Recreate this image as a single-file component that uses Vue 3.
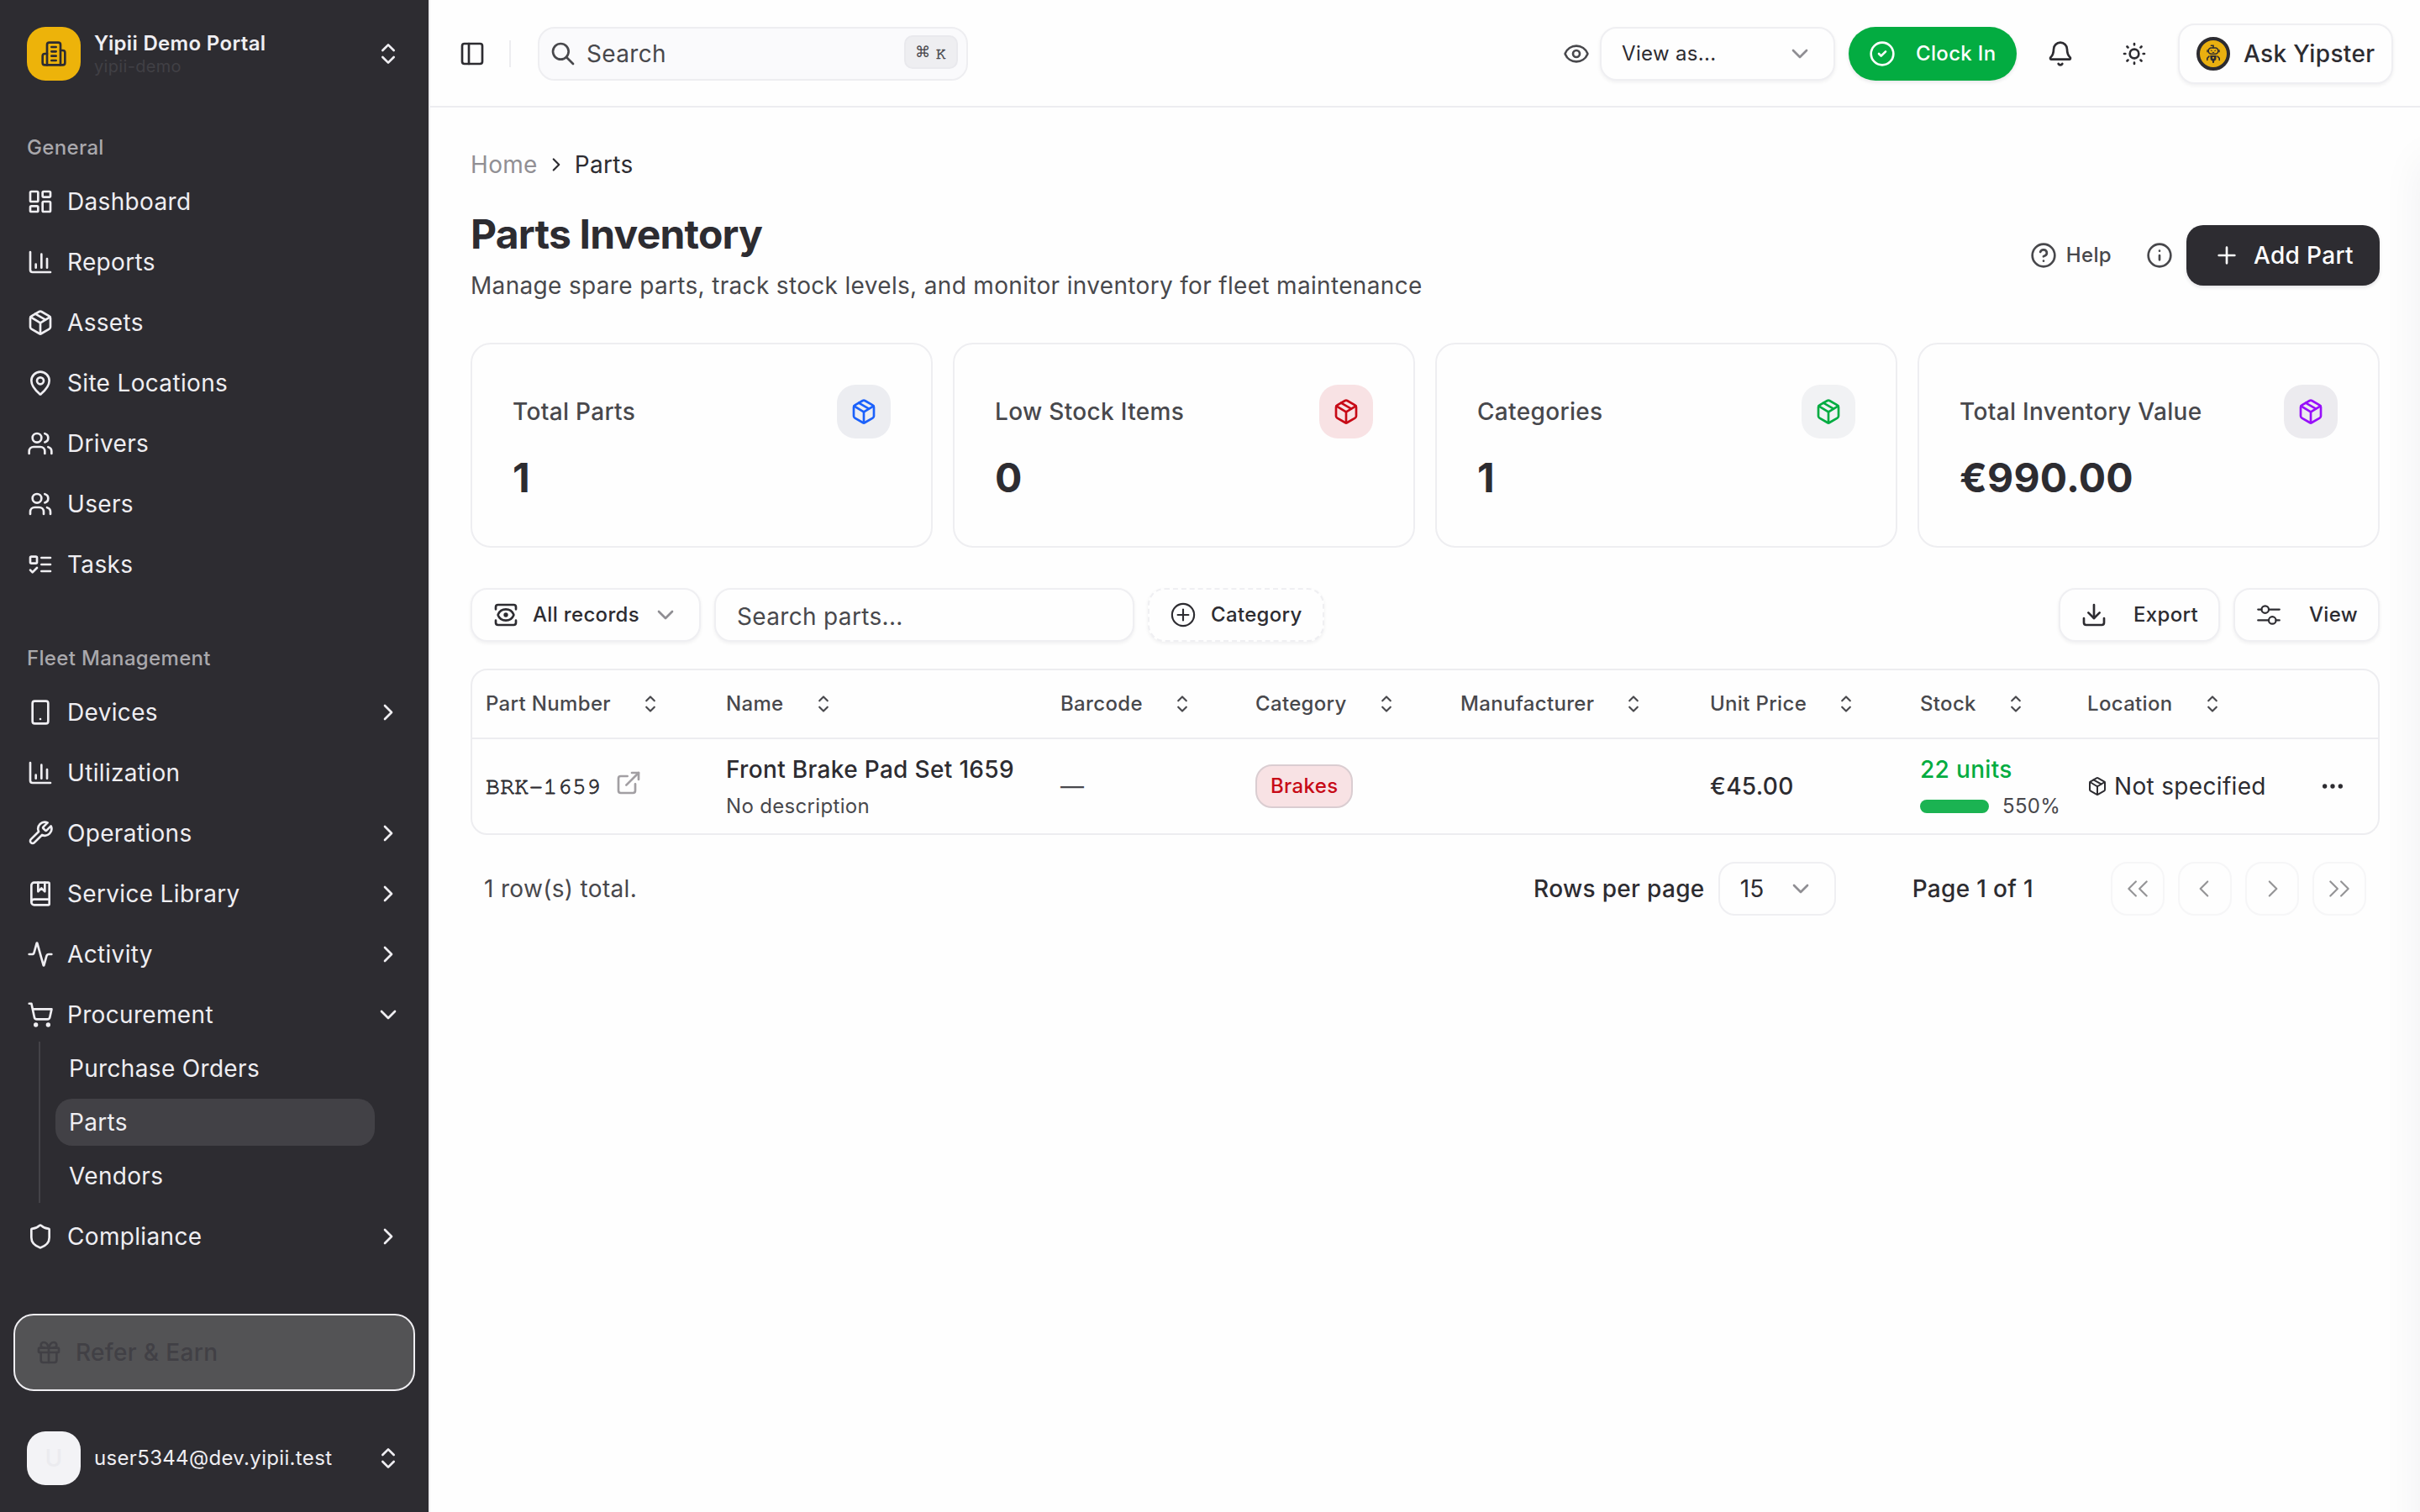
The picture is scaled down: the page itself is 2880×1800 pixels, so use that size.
<script setup>
import { h } from 'vue'

const paths = {
  building: '<path d="M6 22V4a2 2 0 0 1 2-2h8a2 2 0 0 1 2 2v18Z"/><path d="M6 12H4a2 2 0 0 0-2 2v6a2 2 0 0 0 2 2h2"/><path d="M18 9h2a2 2 0 0 1 2 2v9a2 2 0 0 1-2 2h-2"/><path d="M10 6h4M10 10h4M10 14h4M10 18h4"/>',
  updown: '<path d="m7 15 5 5 5-5"/><path d="m7 9 5-5 5 5"/>',
  dashboard: '<rect width="7" height="9" x="3" y="3" rx="1"/><rect width="7" height="5" x="14" y="3" rx="1"/><rect width="7" height="9" x="14" y="12" rx="1"/><rect width="7" height="5" x="3" y="16" rx="1"/>',
  chart: '<path d="M3 3v16a2 2 0 0 0 2 2h16"/><path d="M18 17V9M13 17V5M8 17v-3"/>',
  package: '<path d="M11 21.73a2 2 0 0 0 2 0l7-4A2 2 0 0 0 21 16V8a2 2 0 0 0-1-1.73l-7-4a2 2 0 0 0-2 0l-7 4A2 2 0 0 0 3 8v8a2 2 0 0 0 1 1.73z"/><path d="M12 22V12"/><path d="m3.3 7 7.703 4.734a2 2 0 0 0 1.994 0L20.7 7"/><path d="m7.5 4.27 9 5.15"/>',
  pin: '<path d="M20 10c0 4.993-5.539 10.193-7.399 11.799a1 1 0 0 1-1.202 0C9.539 20.193 4 14.993 4 10a8 8 0 0 1 16 0"/><circle cx="12" cy="10" r="3"/>',
  drivers: '<path d="M16 21v-2a4 4 0 0 0-4-4H6a4 4 0 0 0-4 4v2"/><circle cx="9" cy="7" r="4"/><path d="M22 21v-2a4 4 0 0 0-3-3.87"/><path d="M16 3.13a4 4 0 0 1 0 7.75"/>',
  users: '<circle cx="9" cy="7" r="4"/><path d="M3 21v-2a4 4 0 0 1 4-4h4a4 4 0 0 1 4 4v2"/><path d="M16 3.13a4 4 0 0 1 0 7.75"/><path d="M21 21v-2a4 4 0 0 0-3-3.85"/>',
  tasks: '<rect x="3" y="5" width="6" height="6" rx="1"/><path d="m3 17 2 2 4-4"/><path d="M13 6h8M13 12h8M13 18h8"/>',
  phone: '<rect width="14" height="20" x="5" y="2" rx="2"/><path d="M12 18h.01"/>',
  wrench: '<path d="M14.7 6.3a1 1 0 0 0 0 1.4l1.6 1.6a1 1 0 0 0 1.4 0l3.77-3.77a6 6 0 0 1-7.94 7.94l-6.91 6.91a2.12 2.12 0 0 1-3-3l6.91-6.91a6 6 0 0 1 7.94-7.94l-3.76 3.76z"/>',
  book: '<path d="M10 2v8l3-3 3 3V2"/><path d="M4 19.5v-15A2.5 2.5 0 0 1 6.5 2H19a1 1 0 0 1 1 1v18a1 1 0 0 1-1 1H6.5a1 1 0 0 1 0-5H20"/>',
  activity: '<path d="M22 12h-2.48a2 2 0 0 0-1.93 1.46l-2.35 8.36a.25.25 0 0 1-.48 0L9.24 2.18a.25.25 0 0 0-.48 0l-2.35 8.36A2 2 0 0 1 4.49 12H2"/>',
  cart: '<circle cx="8" cy="21" r="1"/><circle cx="19" cy="21" r="1"/><path d="M2.05 2.05h2l2.66 12.42a2 2 0 0 0 2 1.58h9.78a2 2 0 0 0 1.95-1.57l1.65-7.43H5.12"/>',
  shield: '<path d="M20 13c0 5-3.5 7.5-7.66 8.95a1 1 0 0 1-.67-.01C7.5 20.5 4 18 4 13V6a1 1 0 0 1 1-1c2 0 4.5-1.2 6.24-2.72a1.17 1.17 0 0 1 1.52 0C14.51 3.81 17 5 19 5a1 1 0 0 1 1 1z"/>',
  gift: '<rect x="3" y="8" width="18" height="4" rx="1"/><path d="M12 8v13"/><path d="M19 12v7a2 2 0 0 1-2 2H7a2 2 0 0 1-2-2v-7"/><path d="M7.5 8a2.5 2.5 0 0 1 0-5A4.8 8 0 0 1 12 8a4.8 8 0 0 1 4.5-5 2.5 2.5 0 0 1 0 5"/>',
  right: '<path d="m9 18 6-6-6-6"/>',
  down: '<path d="m6 9 6 6 6-6"/>',
  panel: '<rect width="18" height="18" x="3" y="3" rx="2"/><path d="M9 3v18"/>',
  search: '<circle cx="10" cy="10" r="7"/><path d="m21 21-6-6"/>',
  eye: '<path d="M2.062 12.348a1 1 0 0 1 0-.696 10.75 10.75 0 0 1 19.876 0 1 1 0 0 1 0 .696 10.75 10.75 0 0 1-19.876 0"/><circle cx="12" cy="12" r="3"/>',
  check: '<circle cx="12" cy="12" r="10"/><path d="m9 12 2 2 4-4"/>',
  bell: '<path d="M10.268 21a2 2 0 0 0 3.464 0"/><path d="M3.262 15.326A1 1 0 0 0 4 17h16a1 1 0 0 0 .74-1.673C19.41 13.956 18 12.499 18 8A6 6 0 0 0 6 8c0 4.499-1.411 5.956-2.738 7.326"/>',
  sun: '<circle cx="12" cy="12" r="4"/><path d="M12 3v1M12 20v1M3 12h1M20 12h1M18.364 5.636l-.707.707M6.343 17.657l-.707.707M5.636 5.636l.707.707M17.657 17.657l.707.707"/>',
  help: '<circle cx="12" cy="12" r="10"/><path d="M9.09 9a3 3 0 0 1 5.83 1c0 2-3 3-3 3"/><path d="M12 17h.01"/>',
  info: '<circle cx="12" cy="12" r="10"/><path d="M12 16v-4M12 8h.01"/>',
  plus: '<path d="M5 12h14M12 5v14"/>',
  view: '<path d="M21 17v2a2 2 0 0 1-2 2H5a2 2 0 0 1-2-2v-2"/><path d="M21 7V5a2 2 0 0 0-2-2H5a2 2 0 0 0-2 2v2"/><circle cx="12" cy="12" r="1"/><path d="M18.944 12.33a1 1 0 0 0 0-.66 7.5 7.5 0 0 0-13.888 0 1 1 0 0 0 0 .66 7.5 7.5 0 0 0 13.888 0"/>',
  download: '<path d="M21 15v4a2 2 0 0 1-2 2H5a2 2 0 0 1-2-2v-4"/><path d="m7 10 5 5 5-5"/><path d="M12 15V3"/>',
  external: '<path d="M15 3h6v6"/><path d="M10 14 21 3"/><path d="M18 13v6a2 2 0 0 1-2 2H5a2 2 0 0 1-2-2V8a2 2 0 0 1 2-2h6"/>',
  dots: '<circle cx="12" cy="12" r="1"/><circle cx="19" cy="12" r="1"/><circle cx="5" cy="12" r="1"/>'
}

// Thin icons drawn on a 15-unit grid with a one-unit stroke
const thin = {
  sort: '<path d="M5.25 5.75 7.5 3.5l2.25 2.25M5.25 9.25 7.5 11.5l2.25-2.25"/>',
  plusCircle: '<circle cx="7.5" cy="7.5" r="6.15"/><path d="M7.5 4.5v6M4.5 7.5h6"/>',
  mixer: '<circle cx="5.5" cy="4.5" r="2"/><circle cx="9.5" cy="10.5" r="2"/><path d="M1.5 4.5h2M7.5 4.5h6M1.5 10.5h6M11.5 10.5h2"/>',
  first: '<path d="M6.5 3.5l-4 4 4 4M12.5 3.5l-4 4 4 4"/>',
  prev: '<path d="M9 3.5l-4 4 4 4"/>',
  next: '<path d="M6 3.5l4 4-4 4"/>',
  last: '<path d="M2.5 3.5l4 4-4 4M8.5 3.5l4 4-4 4"/>'
}

const Icon = (props) => {
  const isThin = props.name in thin
  return h('svg', {
    width: props.size || 32,
    height: props.size || 32,
    viewBox: isThin ? '0 0 15 15' : '0 0 24 24',
    fill: 'none',
    stroke: 'currentColor',
    'stroke-width': isThin ? 1 : 2,
    'stroke-linecap': 'round',
    'stroke-linejoin': 'round',
    style: 'display:block;flex:none',
    innerHTML: isThin ? thin[props.name] : paths[props.name]
  })
}
Icon.props = ['name', 'size']

const general = [
  ['dashboard', 'Dashboard'], ['chart', 'Reports'], ['package', 'Assets'], ['pin', 'Site Locations'],
  ['drivers', 'Drivers'], ['users', 'Users'], ['tasks', 'Tasks']
]
const fleet = [
  { icon: 'phone', label: 'Devices', arrow: 'right' },
  { icon: 'chart', label: 'Utilization' },
  { icon: 'wrench', label: 'Operations', arrow: 'right' },
  { icon: 'book', label: 'Service Library', arrow: 'right' },
  { icon: 'activity', label: 'Activity', arrow: 'right' },
  { icon: 'cart', label: 'Procurement', arrow: 'down', children: ['Purchase Orders', 'Parts', 'Vendors'] },
  { icon: 'shield', label: 'Compliance', arrow: 'right' }
]
const stats = [
  { label: 'Total Parts', value: '1', tone: 'blue' },
  { label: 'Low Stock Items', value: '0', tone: 'red' },
  { label: 'Categories', value: '1', tone: 'green' },
  { label: 'Total Inventory Value', value: '€990.00', tone: 'purple' }
]
const columns = ['Part Number', 'Name', 'Barcode', 'Category', 'Manufacturer', 'Unit Price', 'Stock', 'Location']
const pager = ['first', 'prev', 'next', 'last']
</script>

<template>
  <div class="app">
    <aside class="sidebar">
      <div class="brand">
        <div class="logo"><Icon name="building" /></div>
        <div class="brand-text">
          <strong>Yipii Demo Portal</strong>
          <span>yipii-demo</span>
        </div>
        <Icon name="updown" />
      </div>

      <nav class="group">
        <div class="group-label">General</div>
        <a v-for="[icon, label] in general" :key="label" class="item"><Icon :name="icon" /><span>{{ label }}</span></a>
      </nav>

      <nav class="group second">
        <div class="group-label">Fleet Management</div>
        <template v-for="entry in fleet" :key="entry.label">
          <a class="item">
            <Icon :name="entry.icon" /><span>{{ entry.label }}</span>
            <Icon v-if="entry.arrow" :name="entry.arrow" />
          </a>
          <div v-if="entry.children" class="sub">
            <a v-for="c in entry.children" :key="c" class="sub-item" :class="{ active: c === 'Parts' }">{{ c }}</a>
          </div>
        </template>
      </nav>

      <div class="refer"><Icon name="gift" /><span>Refer &amp; Earn</span></div>
      <div class="user">
        <div class="avatar">U</div>
        <span>user5344@dev.yipii.test</span>
        <Icon name="updown" />
      </div>
    </aside>

    <div class="page">
      <header class="topbar">
        <Icon name="panel" />
        <i class="divider"></i>
        <div class="search">
          <Icon name="search" /><span>Search</span>
          <kbd><span class="cmd">⌘</span><span class="key">K</span></kbd>
        </div>
        <div class="top-right">
          <Icon name="eye" class="muted" />
          <div class="box view-as"><span>View as...</span><Icon name="down" class="faint" /></div>
          <button class="clock"><Icon name="check" /><span>Clock In</span></button>
          <Icon name="bell" class="bell" />
          <Icon name="sun" class="sun" />
          <div class="box ask">
            <svg class="robot" width="40" height="40" viewBox="0 0 40 40">
              <circle cx="20" cy="20" r="18" fill="#eab010" stroke="#2d2c31" stroke-width="4" />
              <g fill="none" stroke="#2d2c31" stroke-width="1.6" stroke-linecap="round">
                <path d="M20 12.6v-2.4h-2.6" />
                <rect x="14.2" y="13" width="11.6" height="7.2" rx="3.4" />
                <path d="M15 23l-2.2 2.4v2M25 23l2.2 2.4v2" />
              </g>
              <path d="M13 15.2v3M27 15.2v3" stroke="#2d2c31" stroke-width="1.4" />
              <path d="M16.2 22h7.6l-.6 5.2-2 1.2-.4 2.6h-1.6l-.4-2.6-2-1.2z" fill="#2d2c31" />
              <path d="M16.8 15.8l1.8.8M23.2 15.8l-1.8.8M18.8 18.4h2.4" stroke="#2d2c31" stroke-width="1" />
              <circle cx="20" cy="24.8" r="1.1" fill="#eab010" />
            </svg>
            <span>Ask Yipster</span>
          </div>
        </div>
      </header>

      <main class="content">
        <div class="crumbs"><span>Home</span><Icon name="right" :size="26" /><b>Parts</b></div>

        <div class="title-row">
          <div>
            <h1>Parts Inventory</h1>
            <p>Manage spare parts, track stock levels, and monitor inventory for fleet maintenance</p>
          </div>
          <div class="actions">
            <span class="help"><Icon name="help" />Help</span>
            <Icon name="info" class="muted" />
            <button class="add"><Icon name="plus" /><span>Add Part</span></button>
          </div>
        </div>

        <section class="stats">
          <div v-for="s in stats" :key="s.label" class="card">
            <div class="card-top">
              <span>{{ s.label }}</span>
              <div class="tile" :class="s.tone"><Icon name="package" /></div>
            </div>
            <div class="value">{{ s.value }}</div>
          </div>
        </section>

        <div class="toolbar">
          <div class="box records"><Icon name="view" /><span>All records</span><Icon name="down" class="faint" /></div>
          <div class="box filter">Search parts...</div>
          <div class="box dashed"><Icon name="plusCircle" /><span>Category</span></div>
          <div class="box export"><Icon name="download" /><span>Export</span></div>
          <div class="box columns"><Icon name="mixer" /><span>View</span></div>
        </div>

        <div class="table">
          <div class="row head">
            <div v-for="c in columns" :key="c" class="cell"><span>{{ c }}</span><Icon name="sort" /></div>
            <div></div>
          </div>
          <div class="row body">
            <div class="cell"><span class="mono">BRK-1659</span><Icon name="external" class="ext" /></div>
            <div class="cell stack"><b>Front Brake Pad Set 1659</b><small>No description</small></div>
            <div class="cell dash">—</div>
            <div class="cell"><span class="badge">Brakes</span></div>
            <div class="cell"></div>
            <div class="cell"><b>€45.00</b></div>
            <div class="cell stack">
              <b class="green-text">22 units</b>
              <div class="level"><i class="bar"></i><small>550%</small></div>
            </div>
            <div class="cell loc"><Icon name="package" :size="24" /><span>Not specified</span></div>
            <div class="more"><Icon name="dots" /></div>
          </div>
        </div>

        <div class="footer">
          <span class="total">1 row(s) total.</span>
          <b>Rows per page</b>
          <div class="box size"><span>15</span><Icon name="down" class="faint" /></div>
          <b class="page-no">Page 1 of 1</b>
          <div class="pager"><div v-for="p in pager" :key="p" class="box"><Icon :name="p" /></div></div>
        </div>
      </main>
      <div class="edge"></div>
    </div>
  </div>
</template>

<style>
body { margin: 0; background: #fefefe; overflow: hidden; }
</style>

<style scoped>
* { box-sizing: border-box; }
.app {
  display: flex;
  width: 2880px;
  height: 1800px;
  overflow: hidden;
  font-family: Inter, sans-serif;
  font-size: 28px;
  line-height: 40px;
  letter-spacing: 0.33px;
  color: #2d2c31;
  background: #fefefe;
  white-space: nowrap;
}
b { font-weight: 500; }
button { border: 0; font: inherit; letter-spacing: inherit; }

/* Sidebar */
.sidebar {
  width: 512px;
  flex: none;
  display: flex;
  flex-direction: column;
  background: #2d2c31;
  border-right: 2px solid #ededf0;
  color: #efeef2;
  padding-bottom: 32px;
}
.brand, .user { display: flex; align-items: center; padding: 0 32px; gap: 16px; }
.brand { height: 128px; }
.logo, .avatar { width: 64px; height: 64px; border-radius: 22px; display: grid; place-items: center; flex: none; }
.logo { background: #edb30a; color: #2d2c31; }
.brand-text { flex: 1; display: flex; flex-direction: column; }
.brand-text strong { font-size: 24px; line-height: 30px; font-weight: 600; }
.brand-text span { font-size: 20px; line-height: 25px; color: #414045; }
.group { display: flex; flex-direction: column; gap: 8px; padding: 16px 16px 0; }
.group.second { padding-top: 48px; }
.group-label { height: 64px; line-height: 64px; padding-left: 16px; font-size: 24px; font-weight: 500; color: #a9a8ac; margin-bottom: -8px; }
.item { height: 64px; display: flex; align-items: center; gap: 16px; padding: 0 16px; }
.item span { flex: 1; }
.sub { margin: -8px 30px 0 30px; border-left: 2px solid #434247; padding: 4px 0 4px 18px; display: flex; flex-direction: column; gap: 8px; }
.sub-item { height: 56px; line-height: 56px; padding-left: 16px; border-radius: 20px; margin-right: 18px; }
.sub-item.active { background: #424146; }
.refer {
  margin: auto 16px 48px;
  height: 92px;
  border: 2px solid #efeef2;
  border-radius: 24px;
  background: #535355;
  color: #414045;
  font-weight: 500;
  display: flex;
  align-items: center;
  gap: 16px;
  padding-left: 24px;
}
.user { font-size: 24px; }
.user span { flex: 1; }
.avatar { background: #f3f3f6; color: #ebebef; font-size: 28px; font-weight: 500; }

/* Top bar */
.page { flex: 1; min-width: 0; position: relative; }
.topbar { height: 128px; border-bottom: 2px solid #ededf0; display: flex; align-items: center; padding: 2px 32px 0 34px; }
.divider { width: 2px; height: 32px; background: #ededf0; margin: 0 32px 0 28px; }
.search {
  width: 512px;
  height: 64px;
  border: 2px solid #eeeef1;
  border-radius: 20px;
  background: #fafafc;
  display: flex;
  align-items: center;
  padding: 0 10px 0 12px;
  gap: 12px;
  color: #48484c;
}
.search > span { flex: 1; }
kbd {
  width: 64px;
  height: 40px;
  margin-top: -4px;
  border: 2px solid #e9e9ed;
  border-radius: 10px;
  background: #eeeef1;
  display: flex;
  align-items: center;
  justify-content: center;
  gap: 8px;
  letter-spacing: 0;
}
.cmd { font: 26px/36px 'DejaVu Sans Mono', monospace; }
.key { font: 20px/36px FreeMono, 'Liberation Mono', monospace; -webkit-text-stroke: 0.6px currentColor; padding-top: 3px; }
.top-right { margin-left: auto; display: flex; align-items: center; }
.box {
  height: 64px;
  border: 2px solid #efeff2;
  border-radius: 20px;
  box-shadow: 0 2px 4px rgba(20, 20, 40, 0.06);
  display: flex;
  align-items: center;
  background: #fefefe;
}
.muted { color: #48484c; }
.faint { color: #8f8e93; }
.view-as { width: 280px; margin: 0 16px 0 12px; padding: 0 24px; justify-content: space-between; font-size: 24px; }
.clock {
  width: 200px;
  height: 64px;
  border-radius: 32px;
  background: #03ac41;
  color: #fefefe;
  font-size: 24px;
  font-weight: 500;
  display: flex;
  align-items: center;
  gap: 24px;
  padding: 0 0 0 24px;
  box-shadow: 0 2px 4px rgba(20, 20, 40, 0.1);
}
.bell { margin-left: 36px; }
.sun { margin: 0 36px 0 56px; }
.ask { width: 256px; height: 72px; padding-left: 20px; gap: 16px; font-weight: 500; }
.robot { display: block; }

/* Content */
.content { padding: 48px; }
.crumbs { height: 40px; display: flex; align-items: center; gap: 9px; }
.crumbs span { color: #918f94; }
.crumbs b { font-weight: 400; }
.title-row { margin-top: 26px; height: 124px; display: flex; justify-content: space-between; align-items: center; }
h1 { margin: 0; font-size: 48px; line-height: 72px; font-weight: 700; letter-spacing: -0.79px; }
p { margin: 5px 0 5px; color: #48484c; }
.actions { display: flex; align-items: center; }
.help { display: flex; align-items: center; gap: 11px; font-size: 24px; font-weight: 500; color: #48484c; margin-right: 41px; }
.add {
  margin-left: 16px;
  width: 230px;
  height: 72px;
  border-radius: 20px;
  background: #2d2c31;
  color: #fefefe;
  font-weight: 500;
  display: flex;
  align-items: center;
  gap: 16px;
  padding: 0 0 0 32px;
  box-shadow: 0 2px 4px rgba(20, 20, 40, 0.12);
}
.stats { margin-top: 42px; display: grid; grid-template-columns: repeat(4, 1fr); gap: 24px; }
.card { height: 244px; border: 2px solid #eeeef1; border-radius: 24px; padding: 48px; }
.card-top { display: flex; align-items: center; justify-content: space-between; font-weight: 500; color: #48484c; }
.tile { width: 64px; height: 64px; border-radius: 22px; display: grid; place-items: center; }
.tile.blue { background: #ecedf1; color: #1b61fb; }
.tile.red { background: #f8e2e4; color: #c70a16; }
.tile.green { background: #f1f2f4; color: #03ac41; }
.tile.purple { background: #ecebef; color: #9810fa; }
.value { margin-top: 15px; font-size: 48px; line-height: 64px; font-weight: 700; letter-spacing: 0.2px; }

.toolbar { margin-top: 48px; display: flex; gap: 16px; font-size: 24px; font-weight: 500; }
.records { width: 274px; padding-left: 24px; gap: 16px; }
.records .faint { margin-left: -1px; }
.filter { width: 500px; padding: 3px 0 0 25px; font-size: 28px; font-weight: 400; color: #48484c; }
.dashed { width: 210px; border-style: dashed; padding-left: 24px; gap: 17px; }
.export { margin-left: auto; width: 192px; padding-left: 24px; gap: 31px; }
.columns { width: 174px; padding-left: 24px; gap: 32px; }

.table { margin-top: 32px; border: 2px solid #ededf0; border-radius: 20px; }
.row { display: grid; grid-template-columns: 286px 398px 232px 244px 297px 250px 199px 292px 1fr; align-items: center; }
.head { height: 82px; border-bottom: 2px solid #ededf0; font-size: 24px; font-weight: 500; color: #48484c; }
.head .cell { gap: 31px; }
.body { height: 112px; }
.cell { display: flex; align-items: center; padding-left: 16px; }
.mono { font-family: FreeMono, 'Liberation Mono', monospace; -webkit-text-stroke: 0.8px currentColor; padding-top: 2px; }
.ext { color: #a29fa3; margin: 0 0 8px 17px; }
.stack { flex-direction: column; align-items: flex-start; gap: 8px; }
small { font-size: 24px; line-height: 32px; color: #48484c; }
.dash { color: #48484c; }
.badge {
  height: 52px;
  line-height: 48px;
  padding: 0 16px;
  border: 2px solid #dacdd1;
  border-radius: 20px;
  background: #f8e2e4;
  color: #c70a16;
  font-size: 24px;
  font-weight: 500;
}
.green-text { color: #03ac41; }
.level { display: flex; align-items: center; gap: 16px; }
.bar { width: 82px; height: 16px; border-radius: 8px; background: #1bb352; }
.loc { gap: 8px; }

.footer { margin-top: 32px; height: 64px; display: flex; align-items: center; }
.footer .box { box-shadow: none; }
.total { margin: 0 auto 0 16px; color: #48484c; }
.size { width: 140px; margin: 0 91px 0 16px; padding: 0 24px; justify-content: space-between; }
.page-no { margin-right: 92px; }
.pager { display: flex; gap: 16px; margin-right: 16px; }
.pager .box { width: 64px; justify-content: center; opacity: 0.5; }

/* Soft shade cast from beyond the right edge */
.edge { position: absolute; left: 100%; top: 190px; bottom: -60px; width: 100px; box-shadow: 0 0 50px rgba(20, 20, 60, 0.06); }
</style>
